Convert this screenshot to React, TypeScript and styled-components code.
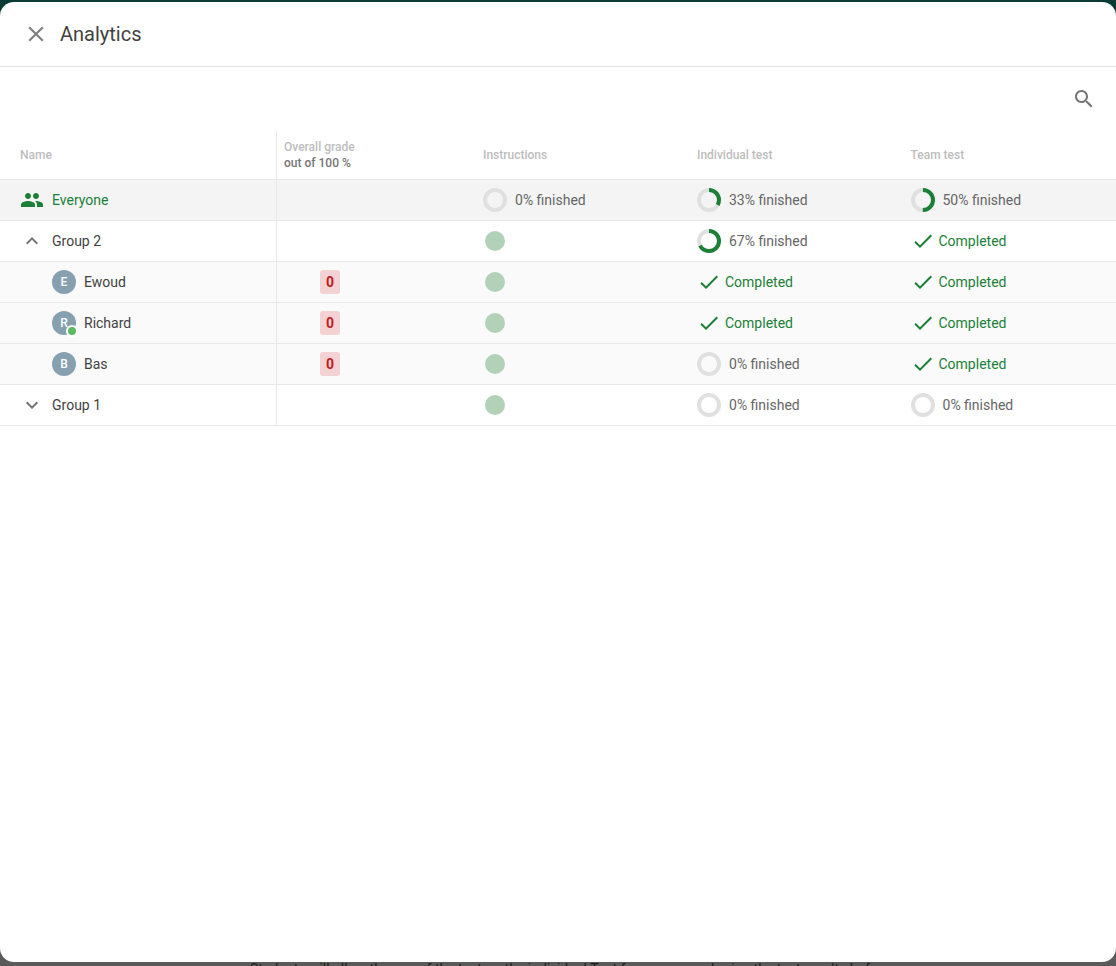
import React from "react";
import styled, { createGlobalStyle } from "styled-components";

const Global = createGlobalStyle`
  html, body { margin: 0; padding: 0; height: 100%; overflow: hidden; }
  body { font-family: Roboto, "Liberation Sans", sans-serif; background: #5a5a5a; }
  * { box-sizing: border-box; }
`;

const Page = styled.div`
  width: 1116px;
  height: 966px;
  display: flex;
  flex-direction: column;
  overflow: hidden;
  background: linear-gradient(#0c3b36 0 20px, #5a5a5a 20px);
  padding-top: 2px;
`;

const Modal = styled.div`
  flex: none;
  height: 960px;
  background: #fff;
  border-radius: 14px;
  display: flex;
  flex-direction: column;
`;

const Strip = styled.div`
  flex: none;
  height: 4px;
  overflow: hidden;
  padding-left: 250px;
  font-size: 14px;
  line-height: 14px;
  color: #1f1f1f;
  white-space: nowrap;
`;

const Header = styled.header`
  height: 65px;
  flex: none;
  display: flex;
  align-items: center;
  padding-left: 23px;
  gap: 11px;
  border-bottom: 1px solid #e2e2e2;
`;

const Title = styled.h1`
  margin: 0;
  font-size: 20px;
  font-weight: 400;
  color: #424242;
`;

const Toolbar = styled.div`
  height: 64px;
  flex: none;
  display: flex;
  justify-content: flex-end;
  align-items: flex-start;
  padding: 20px 20px 0 0;
`;

const Icon = styled.svg<{ $color?: string }>`
  flex: none;
  display: block;
  fill: ${(p) => p.$color ?? "#757575"};
`;

const Row = styled.div<{ $kind: "head" | "all" | "group" | "member" }>`
  display: grid;
  grid-template-columns: 277px 199px 214px 213.5px 212.5px;
  height: ${(p) => (p.$kind === "head" ? "49px" : "41px")};
  flex: none;
  border-bottom: 1px solid #e8e8e8;
  background: ${(p) => (p.$kind === "all" ? "#f4f4f4" : p.$kind === "member" ? "#fafafa" : "#fff")};
`;

const NameCell = styled.div<{ $indent?: number }>`
  display: flex;
  align-items: center;
  gap: 8px;
  padding-left: ${(p) => p.$indent ?? 20}px;
  border-right: 1px solid #e8e8e8;
  font-size: 14px;
  color: #424242;
`;

const Cell = styled.div`
  display: flex;
  align-items: center;
  padding-left: 7px;
  font-size: 14px;
  color: #666;
`;

const HeadLabel = styled.div`
  font-size: 12px;
  line-height: 16px;
  font-weight: 500;
  color: #bdbdbd;
`;

const HeadStrong = styled.div`
  color: #757575;
`;

const Green = styled.span`
  color: #1b7f37;
`;

const Status = styled.div`
  display: flex;
  align-items: center;
  gap: 8px;
`;

const Done = styled.div`
  display: flex;
  align-items: center;
  gap: 4px;
  color: #1b7f37;
`;

const Dot = styled.div`
  width: 20px;
  height: 20px;
  margin-left: 2px;
  border-radius: 50%;
  background: #b2d1b7;
`;

const Avatar = styled.div`
  position: relative;
  width: 24px;
  height: 24px;
  border-radius: 50%;
  background: #87a0b0;
  color: #fff;
  font-size: 12px;
  font-weight: 500;
  display: flex;
  align-items: center;
  justify-content: center;
`;

const Presence = styled.span`
  position: absolute;
  right: -2px;
  bottom: -2px;
  width: 12px;
  height: 12px;
  border-radius: 50%;
  background: #5cba63;
  border: 2px solid #fff;
`;

const Grade = styled.div`
  width: 20px;
  height: 24px;
  margin-left: 36px;
  border-radius: 3px;
  background: #f4d1d2;
  color: #c21c1f;
  font-size: 14px;
  font-weight: 700;
  display: flex;
  align-items: center;
  justify-content: center;
`;

const P = {
  close: "M19 6.41 17.59 5 12 10.59 6.41 5 5 6.41 10.59 12 5 17.59 6.41 19 12 13.41 17.59 19 19 17.59 13.41 12z",
  search:
    "M15.5 14h-.79l-.28-.27C15.41 12.59 16 11.11 16 9.5 16 5.91 13.09 3 9.5 3S3 5.91 3 9.5 5.91 16 9.5 16c1.61 0 3.09-.59 4.23-1.57l.27.28v.79l5 4.99L20.49 19l-4.99-5zm-6 0C7.01 14 5 11.99 5 9.5S7.01 5 9.5 5 14 7.01 14 9.5 11.99 14 9.5 14z",
  group:
    "M16 11c1.66 0 2.99-1.34 2.99-3S17.66 5 16 5c-1.66 0-3 1.34-3 3s1.34 3 3 3zm-8 0c1.66 0 2.99-1.34 2.99-3S9.66 5 8 5C6.34 5 5 6.34 5 8s1.34 3 3 3zm0 2c-2.33 0-7 1.17-7 3.5V19h14v-2.5c0-2.33-4.67-3.5-7-3.5zm8 0c-.29 0-.62.02-.97.05 1.16.84 1.97 1.97 1.97 3.45V19h6v-2.5c0-2.33-4.67-3.5-7-3.5z",
  up: "M12 8l-6 6 1.41 1.41L12 10.83l4.59 4.58L18 14z",
  down: "M16.59 8.59 12 13.17 7.41 8.59 6 10l6 6 6-6z",
  check: "M9 16.17 4.83 12l-1.42 1.41L9 19 21 7l-1.41-1.41z",
};

const Glyph = ({ d, size = 24, color }: { d: string; size?: number; color?: string }) => (
  <Icon width={size} height={size} viewBox="0 0 24 24" $color={color}>
    <path d={d} />
  </Icon>
);

const Ring = ({ pct }: { pct: number }) => {
  const c = 2 * Math.PI * 10;
  return (
    <svg width="24" height="24" viewBox="0 0 24 24">
      <circle cx="12" cy="12" r="10" fill="none" stroke="#e0e0e0" strokeWidth="4" />
      {pct > 0 && (
        <circle
          cx="12"
          cy="12"
          r="10"
          fill="none"
          stroke="#1b7f37"
          strokeWidth="4"
          strokeDasharray={`${(c * pct) / 100} ${c}`}
          transform="rotate(-90 12 12)"
        />
      )}
    </svg>
  );
};

const Progress = ({ pct }: { pct: number }) => (
  <Status>
    <Ring pct={pct} />
    <span>{pct}% finished</span>
  </Status>
);

const Completed = () => (
  <Done>
    <Glyph d={P.check} color="#1b7f37" />
    <span>Completed</span>
  </Done>
);

const members = [
  { name: "Ewoud", online: false, test: <Completed /> },
  { name: "Richard", online: true, test: <Completed /> },
  { name: "Bas", online: false, test: <Progress pct={0} /> },
];

export default function App() {
  return (
    <Page>
      <Global />
      <Modal>
        <Header>
          <Glyph d={P.close} size={26} color="#808080" />
          <Title>Analytics</Title>
        </Header>
        <Toolbar>
          <Glyph d={P.search} />
        </Toolbar>
        <Row $kind="head">
          <NameCell>
            <HeadLabel>Name</HeadLabel>
          </NameCell>
          <Cell>
            <HeadLabel>
              Overall grade
              <HeadStrong>out of 100 %</HeadStrong>
            </HeadLabel>
          </Cell>
          <Cell>
            <HeadLabel>Instructions</HeadLabel>
          </Cell>
          <Cell>
            <HeadLabel>Individual test</HeadLabel>
          </Cell>
          <Cell>
            <HeadLabel>Team test</HeadLabel>
          </Cell>
        </Row>
        <Row $kind="all">
          <NameCell>
            <Glyph d={P.group} color="#1b7f37" />
            <Green>Everyone</Green>
          </NameCell>
          <Cell />
          <Cell>
            <Progress pct={0} />
          </Cell>
          <Cell>
            <Progress pct={33} />
          </Cell>
          <Cell>
            <Progress pct={50} />
          </Cell>
        </Row>
        <Row $kind="group">
          <NameCell>
            <Glyph d={P.up} />
            Group 2
          </NameCell>
          <Cell />
          <Cell>
            <Dot />
          </Cell>
          <Cell>
            <Progress pct={67} />
          </Cell>
          <Cell>
            <Completed />
          </Cell>
        </Row>
        {members.map((m) => (
          <Row $kind="member" key={m.name}>
            <NameCell $indent={52}>
              <Avatar>
                {m.name[0]}
                {m.online && <Presence />}
              </Avatar>
              {m.name}
            </NameCell>
            <Cell>
              <Grade>0</Grade>
            </Cell>
            <Cell>
              <Dot />
            </Cell>
            <Cell>{m.test}</Cell>
            <Cell>
              <Completed />
            </Cell>
          </Row>
        ))}
        <Row $kind="group">
          <NameCell>
            <Glyph d={P.down} />
            Group 1
          </NameCell>
          <Cell />
          <Cell>
            <Dot />
          </Cell>
          <Cell>
            <Progress pct={0} />
          </Cell>
          <Cell>
            <Progress pct={0} />
          </Cell>
        </Row>
      </Modal>
      <Strip>Students will allow the use of the test on the individual Test for everyone, sharing the test results before</Strip>
    </Page>
  );
}
